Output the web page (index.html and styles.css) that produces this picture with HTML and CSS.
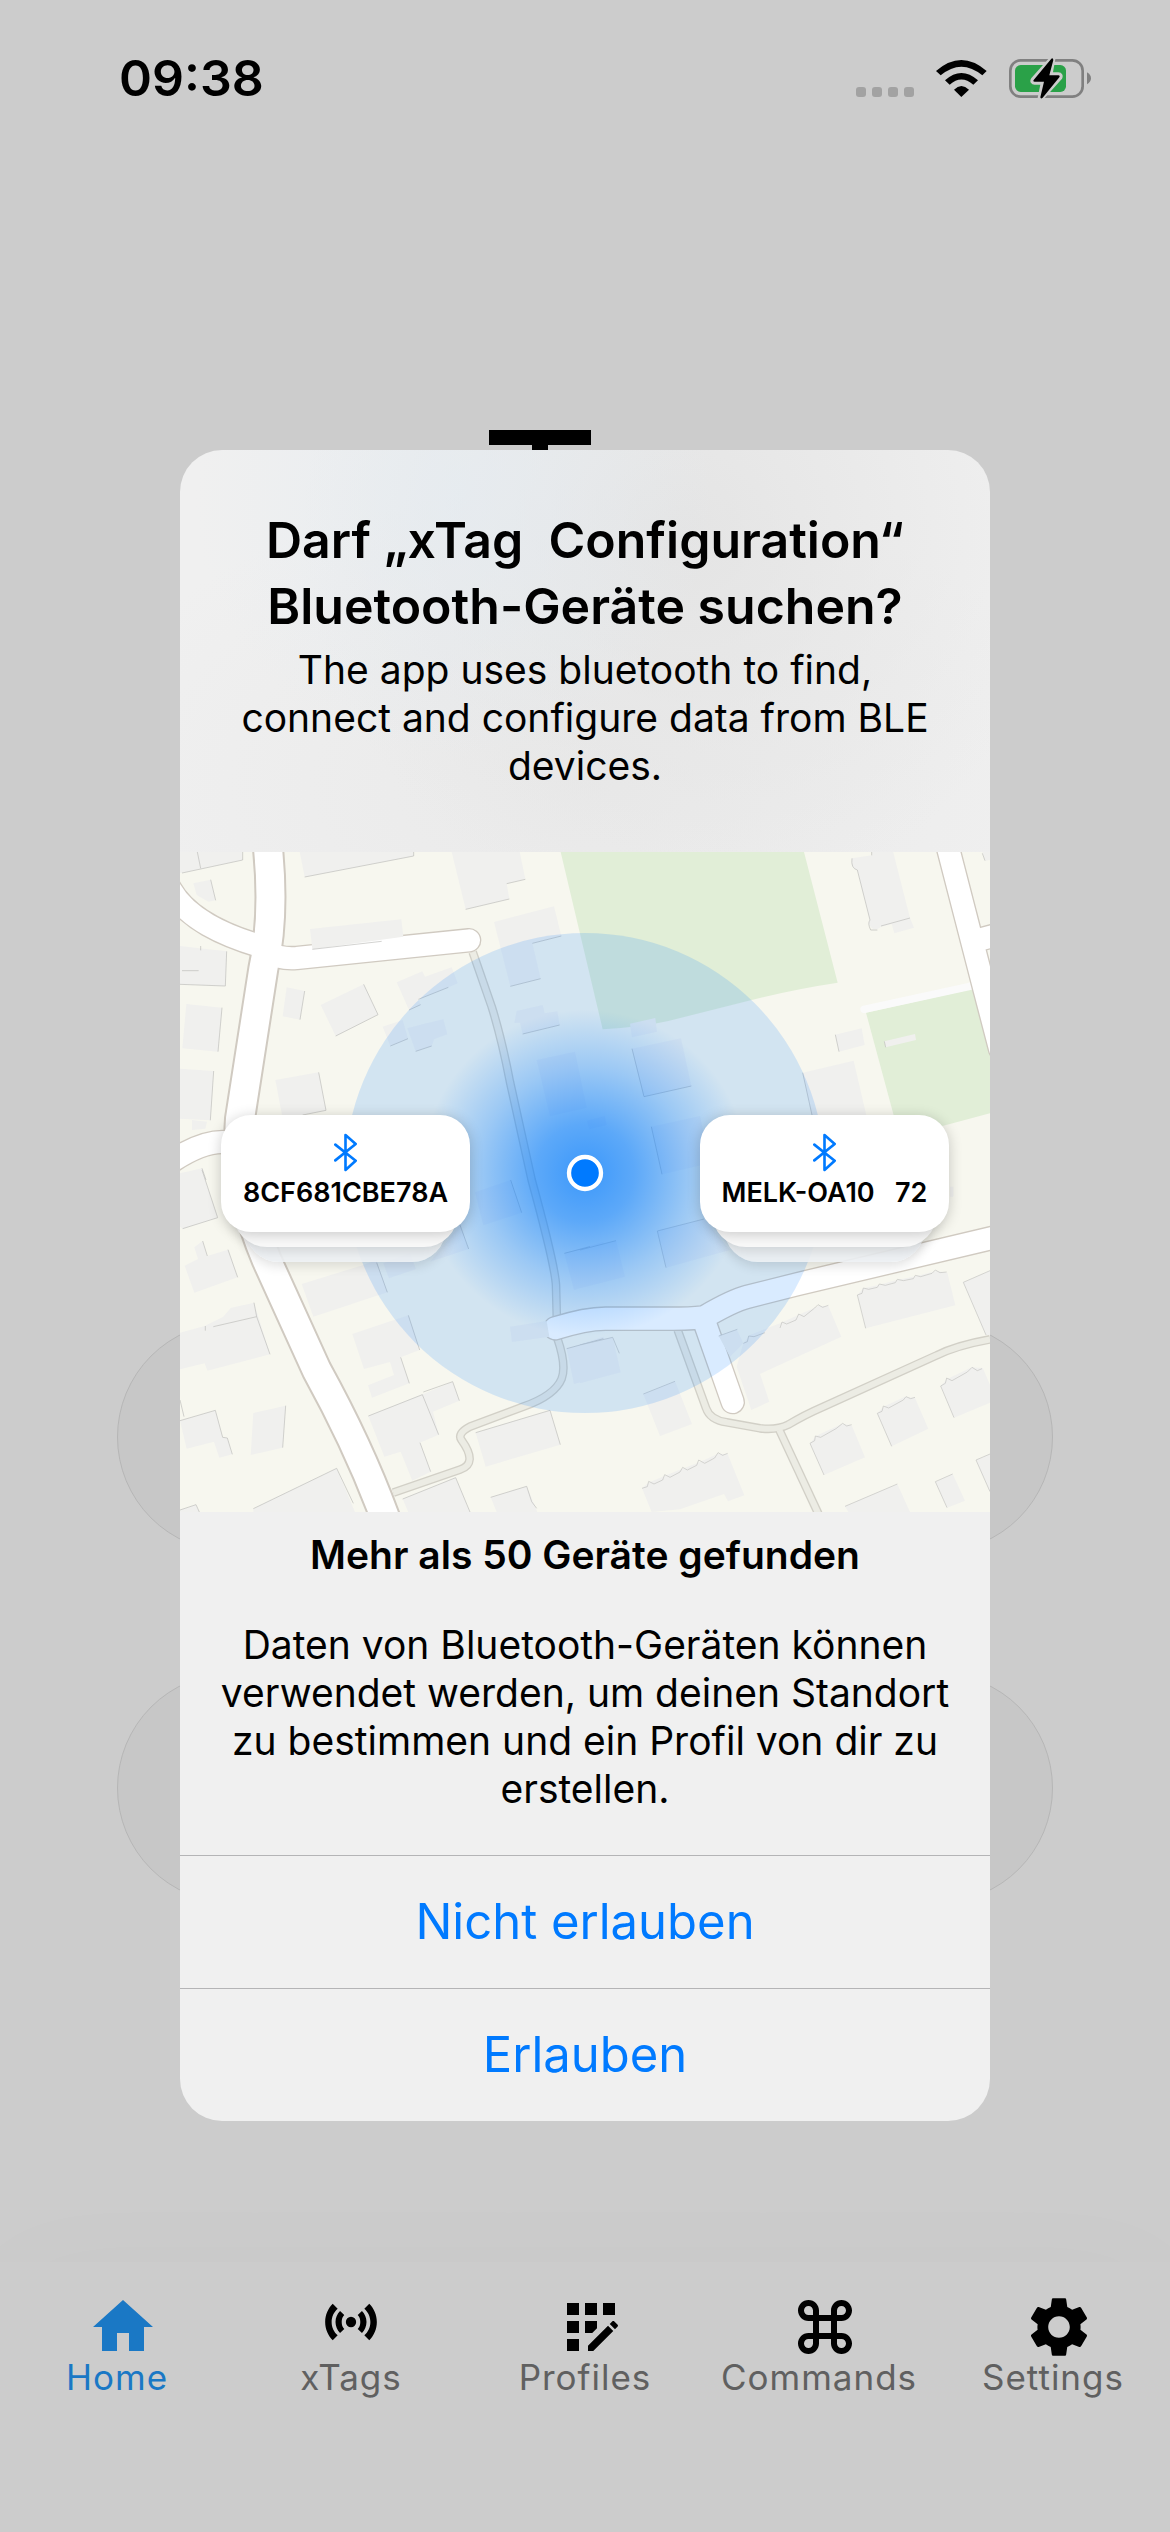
FILE: index.html
```html
<!DOCTYPE html>
<html lang="de">
<head>
<meta charset="utf-8">
<meta name="viewport" content="width=device-width, initial-scale=1">
<title>xTag Configuration</title>
<link rel="stylesheet" href="styles.css">
</head>
<body>
<div class="app">
  <header class="status">
    <time class="status-time">09:38</time>
    <div class="status-icons">
      <svg class="icon-signal" viewBox="78 51 174 123" fill="#a2a2a2" aria-hidden="true">
        <rect x="78" y="138" width="30" height="30" rx="9"/><rect x="126" y="138" width="30" height="30" rx="9"/><rect x="174" y="138" width="30" height="30" rx="9"/><rect x="222" y="138" width="30" height="30" rx="9"/>
      </svg>
      <svg class="icon-wifi" viewBox="318 51 153 123" aria-hidden="true">
        <path d="M318 90Q394 24 470 90L457 103Q394 51 332 103Z"/>
        <path d="M345 118Q394 74 444 118L430 131Q394 100 359 131Z"/>
        <path d="M372 146Q394 124 417 146L394 168Z"/>
      </svg>
      <svg class="icon-battery" viewBox="537 51 246 123" aria-hidden="true">
        <rect x="541" y="58" width="217" height="109" rx="31" fill="none" stroke="#808080" stroke-width="8"/>
        <path d="M771 94Q783 101 783 112T771 130Z" fill="#808080"/>
        <rect x="555" y="72" width="153" height="81" rx="17" fill="#2aa148"/>
        <path d="M667 54L611 117Q608 122 614 122H642L632 171L688 109Q691 103 685 103H658Z" stroke="#ccc" stroke-width="18" stroke-linejoin="round"/>
        <path d="M664 53L611 117Q608 122 614 122H642L631 169Q632 175 638 170L688 109Q691 103 685 103H658L670 57Q669 50 664 53Z"/>
      </svg>
    </div>
  </header>

  <main class="home">
    <svg class="logo" viewBox="0 0 102 120" aria-hidden="true"><path d="M0 0H102V15H59V120H43V15H0Z"/></svg>
    <div class="tile"></div>
    <div class="tile"></div>
  </main>

  <nav class="tabs">
    <a class="tab active" href="#home">
      <svg class="tab-icon" viewBox="0 0 24 24" aria-hidden="true"><path d="M10 20v-6h4v6h5v-8h3L12 3 2 12h3v8z"/></svg>
      <span>Home</span>
    </a>
    <a class="tab" href="#xtags">
      <svg class="tab-icon small" viewBox="0 0 24 24" aria-hidden="true"><path d="M4.930 4.930C3.120 6.740 2 9.240 2 12C2 14.760 3.120 17.260 4.930 19.070L6.840 17.160C5.400 15.900 4.500 14.100 4.500 12C4.500 9.900 5.400 8.100 6.840 6.840ZM19.070 4.930L17.160 6.840C18.600 8.100 19.500 9.900 19.500 12C19.500 14.100 18.600 15.900 17.160 17.160L19.070 19.070C20.880 17.260 22 14.760 22 12C22 9.240 20.880 6.740 19.070 4.930ZM7.760 7.760C6.670 8.850 6 10.350 6 12C6 13.650 6.670 15.150 7.760 16.240L9.400 14.700C8.700 14 8.400 13.110 8.400 12C8.400 10.890 8.700 10 9.400 9.300ZM16.240 7.760L14.600 9.300C15.300 10 15.600 10.890 15.600 12C15.600 13.110 15.300 14 14.600 14.700L16.240 16.240C17.330 15.150 18 13.650 18 12C18 10.350 17.330 8.850 16.240 7.760ZM12 10A2 2 0 1 0 12 14A2 2 0 1 0 12 10Z"/></svg>
      <span>xTags</span>
    </a>
    <a class="tab" href="#profiles">
      <svg class="tab-icon" viewBox="0 0 24 24" aria-hidden="true"><path d="M10 4h4v4h-4zM4 16h4v4H4zM4 10h4v4H4zM4 4h4v4H4zM14 12.420V10h-4v4h2.420zM20.880 11.290l-1.170-1.170c-.16-.16-.42-.16-.58 0l-.88.88L20 12.750l.88-.88c.16-.16.16-.42 0-.58zM11 18.250V20h1.750l6.670-6.670-1.750-1.750zM16 4h4v4h-4z"/></svg>
      <span>Profiles</span>
    </a>
    <a class="tab" href="#commands">
      <svg class="tab-icon" viewBox="0 0 24 24" aria-hidden="true"><path d="M17.500 3C15.570 3 14 4.570 14 6.500V8h-4V6.500C10 4.570 8.430 3 6.500 3S3 4.570 3 6.500S4.570 10 6.500 10H8v4H6.500C4.570 14 3 15.570 3 17.500S4.570 21 6.500 21s3.500-1.570 3.500-3.500V16h4v1.500c0 1.930 1.570 3.500 3.500 3.500s3.500-1.570 3.500-3.500S19.430 14 17.500 14H16v-4h1.500c1.930 0 3.500-1.570 3.500-3.500S19.430 3 17.500 3zM16 8V6.500C16 5.670 16.670 5 17.500 5S19 5.670 19 6.500S18.330 8 17.500 8H16zM6.500 8C5.670 8 5 7.330 5 6.500S5.670 5 6.500 5S8 5.670 8 6.500V8H6.500zM10 14v-4h4v4H10zM17.500 19c-.83 0-1.500-.67-1.500-1.500V16h1.500c.83 0 1.500.67 1.500 1.500S18.330 19 17.500 19zM6.500 19C5.670 19 5 18.330 5 17.500S5.670 16 6.500 16H8v1.500C8 18.330 7.330 19 6.500 19z"/></svg>
      <span>Commands</span>
    </a>
    <a class="tab" href="#settings">
      <svg class="tab-icon" viewBox="0 0 24 24" aria-hidden="true"><path d="M19.140 12.940c.04-.3.06-.61.06-.94 0-.32-.02-.64-.07-.94l2.030-1.580c.18-.14.23-.41.12-.61l-1.920-3.320c-.12-.22-.37-.29-.59-.22l-2.390.96c-.5-.38-1.030-.7-1.620-.94l-.36-2.540c-.04-.24-.24-.41-.48-.41h-3.840c-.24 0-.43.17-.47.41l-.36 2.540c-.59.24-1.130.57-1.620.94l-2.390-.96c-.22-.08-.47 0-.59.22L2.740 8.870c-.12.21-.08.47.12.61l2.030 1.580c-.05.3-.09.63-.09.94s.02.64.07.94l-2.030 1.580c-.18.14-.23.41-.12.61l1.920 3.320c.12.22.37.29.59.22l2.390-.96c.5.38 1.030.7 1.620.94l.36 2.540c.05.24.24.41.48.41h3.840c.24 0 .44-.17.47-.41l.36-2.540c.59-.24 1.130-.56 1.620-.94l2.390.96c.22.08.47 0 .59-.22l1.920-3.320c.12-.22.07-.47-.12-.61l-2.010-1.580zM12 15.600c-1.980 0-3.600-1.620-3.600-3.600s1.620-3.600 3.600-3.600 3.600 1.620 3.600 3.600-1.620 3.600-3.600 3.600z"/></svg>
      <span>Settings</span>
    </a>
  </nav>
</div>

<div class="overlay">
  <section class="dialog" role="alertdialog" aria-modal="true" aria-labelledby="dialog-title" aria-describedby="dialog-text">
    <div class="dialog-head">
      <h1 class="dialog-title" id="dialog-title">Darf „xTag&nbsp; Configuration“ Bluetooth-Geräte suchen?</h1>
      <p class="dialog-text" id="dialog-text">The app uses bluetooth to find, connect and configure data from BLE devices.</p>
    </div>

    <div class="map">
      <svg class="map-art" viewBox="0 0 2430 1980" preserveAspectRatio="xMidYMid slice" aria-hidden="true">
        <defs>
          <radialGradient id="glow">
            <stop offset="0" stop-color="#007aff" stop-opacity=".72"/>
            <stop offset=".3" stop-color="#007aff" stop-opacity=".56"/>
            <stop offset=".65" stop-color="#007aff" stop-opacity=".26"/>
            <stop offset="1" stop-color="#007aff" stop-opacity="0"/>
          </radialGradient>
        </defs>
        <rect width="2430" height="1980" fill="#f7f7ef"/>
        <g fill="#e1eed7">
          <path d="M1142 0L1268 532Q1380 526 1465 507L1715 444Q1840 412 1973 392L1872 0Z"/>
          <path d="M2058 482L2380 410L2430 580V784L2290 821L2152 830Z"/>
        </g>
        <path d="M2052 472L2380 401" fill="none" stroke="#fafafa" stroke-width="22" stroke-linecap="round"/>

        <!-- footpaths: edge, then fill -->
        <g fill="none" stroke-linejoin="round">
          <g stroke="#d2d0c7" stroke-width="26">
            <path d="M878 300L935 464Q965 560 990 690L1055 984Q1125 1240 1128 1300L1132 1459Q1160 1540 1145 1580Q1125 1630 1030 1664L870 1724Q830 1745 845 1765Q895 1835 840 1853L640 1922"/>
            <path d="M1493 1434L1578 1668Q1590 1704 1640 1711L1740 1729Q1790 1735 1825 1718Q1870 1690 1930 1664L2270 1510Q2330 1480 2430 1462"/>
            <path d="M1798 1734L1915 1985"/>
          </g>
          <g stroke="#ecece4" stroke-width="18">
            <path d="M878 300L935 464Q965 560 990 690L1055 984Q1125 1240 1128 1300L1132 1459Q1160 1540 1145 1580Q1125 1630 1030 1664L870 1724Q830 1745 845 1765Q895 1835 840 1853L640 1922"/>
            <path d="M1493 1434L1578 1668Q1590 1704 1640 1711L1740 1729Q1790 1735 1825 1718Q1870 1690 1930 1664L2270 1510Q2330 1480 2430 1462"/>
            <path d="M1798 1734L1915 1985"/>
          </g>
        </g>

        <!-- roads: edge, then fill -->
        <g fill="none" stroke="#d0cac1" stroke-linejoin="round" stroke-linecap="round">
          <g stroke-width="96">
            <path d="M263 -20Q285 190 250 350L180 800Q165 1000 260 1224L410 1554Q540 1790 620 2010"/>
          </g>
          <g stroke-width="74">
            <path d="M-30 110C20 200 130 250 250 285"/>
            <path d="M260 300Q300 322 350 318L867 265"/>
            <path d="M-20 925Q80 860 150 872"/>
            <path d="M1126 1429Q1220 1399 1280 1400H1480Q1550 1400 1575 1394Q1660 1345 1700 1335L1850 1297L2440 1157"/>
            <path d="M1570 1400L1658 1650"/>
            <path d="M2302 -20L2414 414L2460 590"/>
            <path d="M2390 265L2440 252"/>
          </g>
        </g>
        <g fill="none" stroke="#fff" stroke-linejoin="round" stroke-linecap="round">
          <g stroke-width="84">
            <path d="M263 -20Q285 190 250 350L180 800Q165 1000 260 1224L410 1554Q540 1790 620 2010"/>
          </g>
          <g stroke-width="66">
            <path d="M-30 110C20 200 130 250 250 285"/>
            <path d="M260 300Q300 322 350 318L867 265"/>
            <path d="M-20 925Q80 860 150 872"/>
            <path d="M1126 1429Q1220 1399 1280 1400H1480Q1550 1400 1575 1394Q1660 1345 1700 1335L1850 1297L2440 1157"/>
            <path d="M1570 1400L1658 1650"/>
            <path d="M2302 -20L2414 414L2460 590"/>
            <path d="M2390 265L2440 252"/>
          </g>
        </g>

        <!-- buildings, north-west -->
        <g transform="translate(-30 -36)" fill="#f0f0ee">
          <path d="M30 30H215L218 60L36 99L30 98ZM70 130L122 119L137 181L115 185L80 165ZM388 30H731V48L404 111ZM845 36L1048 30L1066 118L1010 131L1018 177L887 208ZM420 267L694 238L700 290L427 328ZM972 246L1152 199L1174 288L1087 310L1112 416L1021 439ZM30 318L170 334L166 438L30 433ZM49 492L156 503L144 635L37 625ZM350 442L404 453L390 539L338 529ZM452 495L581 433L624 524L497 588ZM30 686L131 693L121 841L30 836ZM66 840L111 845L106 866L66 870ZM316 720L446 697L468 811L398 825H336ZM680 427L757 394L765 410L845 382L863 430L835 442L745 478L752 494L717 510ZM638 560L698 540L714 596L661 618ZM712 565L760 552L820 538L832 583L792 598L785 618L737 634ZM1040 513L1118 495L1124 520L1162 514L1169 555L1058 582L1050 548L1033 549ZM1100 660L1215 635L1250 803L1140 829ZM30 1000L96 985L108 1020H30Z"/>
          <path d="M36 99L218 60V36M404 111L731 48V36M887 208L1018 177M1010 131L1066 118M1087 310L1174 288M1021 439L1112 416M170 334L166 438L30 433M156 503L144 635M497 588L624 524L581 433M131 693L121 841M446 697L468 811L398 825M745 478L835 442M717 510L752 494M661 618L714 596M737 634L785 618M1058 582L1169 555M427 328L635 304M404 453L390 539M82 36L92 85M122 119L137 181M92 318V331M36 392H86M96 985L108 1020" fill="none" stroke="#bdbdba" stroke-width="2"/>
        </g>
        <!-- buildings, north-east -->
        <g transform="translate(1200 -36)" fill="#f0f0ee">
          <path d="M816 55L875 46V30H938L990 234L1002 263L943 280L935 252L903 260Q880 280 865 250L870 240L832 90Q810 85 816 55ZM766 584L845 565L854 615L777 635ZM668 698L821 662L860 830H696ZM913 604L1005 582L1008 600L917 622ZM1207 36H1230V60L1215 62ZM150 551L226 534L231 575L156 592ZM156 626L303 595L334 738L192 770ZM214 860L360 828L390 970L246 1003ZM20 842L74 828L80 855L28 868Z"/>
          <path d="M875 46V36M832 90L870 240Q862 250 872 270H892M903 258L990 234M816 55Q812 85 832 90M777 635L766 584M668 698L696 825M192 770L334 738M156 626L192 770M246 1003L214 860M917 622L913 604M1207 40L1215 62" fill="none" stroke="#bdbdba" stroke-width="2"/>
        </g>
        <!-- buildings, south-west -->
        <g transform="translate(-30 954)" fill="#f0f0ee">
          <path d="M30 20L96 0L143 143L38 176L30 170ZM44 287L84 267L73 232L98 213L112 258L174 239L203 322L73 368ZM30 488L104 468L160 440L182 414L252 398L300 553L112 602L104 580L30 598ZM250 729L347 707L338 833L242 855ZM30 752L136 721L158 802L172 804L187 853L148 863L132 815L50 836ZM395 342L580 285L620 270L652 367L430 440ZM547 492L715 436L749 540L692 562L718 640L606 683L594 646L672 615L660 576L582 597ZM595 738L760 672L848 635L868 692L789 725L806 794L750 818L782 905L727 932L692 845L643 860ZM917 788L1140 721L1171 824L947 890ZM250 1016L500 895L555 1026H250ZM698 987L857 923L900 1026H715ZM962 982L1070 949L1102 1026H980ZM30 1020L78 1004L88 1026H30ZM1020 470L1130 453L1138 500L1026 516ZM1190 536L1300 500L1330 610L1212 642ZM915 67L1022 30L1055 128L940 166ZM1183 250L1300 215L1330 322L1212 360ZM640 280L720 250L738 297L657 325ZM870 165L896 237L780 275Z"/>
          <path d="M96 0L143 143L38 176M174 239L203 322M98 213L112 258M260 440L300 553M252 398L260 440L130 470M106 468V482M347 707L338 833M136 721L158 802L172 804L187 853M30 752L136 721M620 278L652 367M715 436L749 540M692 562L718 640M595 738L757 674L806 794M760 666L848 635L868 692M750 818L782 905M917 788L1140 721L1171 824M250 1016L500 895L550 1000M698 987L857 923L900 1026M962 982L1070 949L1085 995L1100 1015M30 1020L78 1004L88 1026M30 690L42 740M1190 536L1300 506M1183 250L1260 230M870 165L896 237M1022 30L1055 128" fill="none" stroke="#bdbdba" stroke-width="2"/>
        </g>
        <!-- buildings, south-east -->
        <g transform="translate(1200 954)" fill="#f0f0ee">
          <path d="M832 375L850 355L895 345L950 330L1010 318L1070 303L1102 308L1126 406L857 475ZM1150 337L1230 302V495H1218ZM490 520L510 495L600 460L655 435L715 408L745 408L784 500L540 612L568 695L514 720L470 590ZM416 498L470 478L490 520L450 560ZM190 672L285 634L336 762L240 798ZM1082 648L1100 628L1175 592L1208 594L1250 690L1122 743ZM892 730L910 710L975 680L1005 684L1045 776L935 829ZM690 820L708 798L785 762L815 766L855 862L732 915ZM1188 870L1230 852V965ZM1066 935L1118 912L1155 992L1101 1013ZM795 1009L952 942L990 1026H805ZM186 955L205 938L255 917L305 897L358 877L412 852L443 852L493 976L444 994L432 972L300 1018L215 1026ZM232 183L372 147L450 240L258 293ZM0 240L108 212L135 320L0 355ZM0 525L98 502L122 607L0 640ZM1110 50H1120V80H1110Z"/>
          <path d="M832 375L857 475M832 375L846 370L850 354L866 358L892 352L898 342L916 346L946 338L952 328L970 332L1000 326L1006 316L1022 320L1056 310L1066 300L1080 308L1100 306M490 520L502 515L506 498L522 500L555 488M600 474L606 456L620 462L648 450L656 432L672 440L704 414L714 404L728 412L745 406M416 498L472 478M190 672L285 634M1082 648L1122 743M1082 648L1096 640L1100 624L1116 632L1162 606L1176 592L1192 602L1206 596M892 730L935 829M892 730L906 724L910 708L926 714L970 690L978 680L992 686L1005 682M690 820L732 915M690 820L704 812L706 798L722 802L768 776L788 760L800 768L815 764M1230 852L1188 870L1230 965M1066 935L1118 912M1066 935L1101 1013M795 1009L952 942M186 955L202 950L206 934L222 942L248 930L254 914L270 922L300 906L308 892L322 900L350 886L356 870L374 880L404 864L414 848L428 856L443 850M1150 337L1218 495M1150 337L1230 302M232 183L372 147M232 183L258 293M0 240L108 212M0 525L98 502L118 550" fill="none" stroke="#c2c2bf" stroke-width="2"/>
        </g>

        <circle cx="1215" cy="963" r="720" fill="#007aff" fill-opacity=".15"/>
        <circle cx="1215" cy="963" r="490" fill="url(#glow)"/>
        <circle cx="1215" cy="963" r="48" fill="#007aff" stroke="#fff" stroke-width="13"/>
      </svg>
      <ul class="pins">
        <li class="pin">
          <div class="pin-card">
            <svg class="icon-bluetooth" viewBox="0 0 70 116" aria-hidden="true"><path d="M4 34L66 83L35 111V5L66 32L4 82"/></svg>
            <span>8CF681CBE78A</span>
          </div>
        </li>
        <li class="pin">
          <div class="pin-card">
            <svg class="icon-bluetooth" viewBox="0 0 70 116" aria-hidden="true"><path d="M4 34L66 83L35 111V5L66 32L4 82"/></svg>
            <span>MELK-OA10&nbsp;&nbsp; 72</span>
          </div>
        </li>
      </ul>
    </div>

    <div class="dialog-foot">
      <h2 class="dialog-count">Mehr als 50 Geräte gefunden</h2>
      <p class="dialog-text">Daten von Bluetooth-Geräten können verwendet werden, um deinen Standort zu bestimmen und ein Profil von dir zu erstellen.</p>
    </div>
    <button class="dialog-button" type="button">Nicht erlauben</button>
    <button class="dialog-button" type="button">Erlauben</button>
  </section>
</div>
</body>
</html>
```
FILE: styles.css
```css
* {
  box-sizing: border-box;
  margin: 0;
  padding: 0;
}

body {
  background: #ccc;
  color: #000;
  font-family: Inter, "Liberation Sans", sans-serif;
}

svg {
  display: block;
}

/* Screen behind the dialog */
.app {
  display: flex;
  flex-direction: column;
  min-height: 100vh;
}

.status {
  display: flex;
  justify-content: space-between;
  align-items: center;
  padding: 48px 79px 0 119px;
}

.status-time {
  font-size: 50px;
  font-weight: 600;
  line-height: 60px;
}

.status-icons {
  display: flex;
  gap: 22px;
}

.icon-signal {
  width: 58px;
  height: 41px;
}

.icon-wifi {
  width: 51px;
  height: 41px;
}

.icon-battery {
  width: 82px;
  height: 41px;
}

.home {
  flex: 1;
  display: flex;
  flex-direction: column;
  gap: 121px;
  padding: 322px 117px 0;
}

.logo {
  width: 102px;
  height: 120px;
  margin: 0 0 651px 372px;
}

.tile {
  height: 230px;
  border: 1px solid #b6b6b6;
  border-radius: 115px;
  background: #c7c7c7;
}

.tabs {
  display: grid;
  grid-template-columns: repeat(5, 1fr);
  padding: 29px 0 142px;
  background: #ccc;
  box-shadow: 0 0 120px rgba(0, 0, 0, 0.02);
}

.tab {
  display: flex;
  flex-direction: column;
  align-items: center;
  color: #606060;
  font-size: 35px;
  line-height: 26px;
  letter-spacing: 1px;
  text-decoration: none;
}

.tab-icon {
  width: 72px;
  height: 72px;
  margin: 0 0 1px 12px;
  fill: #000;
}

.tab-icon.small {
  width: 62px;
  height: 62px;
  margin: 0 0 11px;
}

.tab.active {
  color: #1a78c5;
}

.tab.active .tab-icon {
  fill: currentColor;
}

/* Permission dialog */
.overlay {
  position: absolute;
  inset: 0;
  display: grid;
  place-items: center;
  padding: 38px 20px 0;
}

.dialog {
  width: 100%;
  max-width: 810px;
  overflow: hidden;
  border-radius: 42px;
  background:
    radial-gradient(circle 260px at 34% 3%, rgba(228, 235, 241, 0.7), transparent),
    radial-gradient(circle 380px at 62% 5%, rgba(227, 227, 227, 0.9), transparent),
    radial-gradient(ellipse 520px 300px at 50% 20%, rgba(232, 232, 232, 0.8), transparent),
    #f0f0f0;
  text-align: center;
}

.dialog-head {
  padding: 57px 50px 62px;
}

.dialog-title {
  margin-bottom: 7px;
  font-size: 50px;
  font-weight: 600;
  line-height: 66px;
}

.dialog-text {
  font-size: 39px;
  line-height: 48px;
}

.dialog-foot {
  padding: 19px 30px 42px;
}

.dialog-count {
  margin-bottom: 42px;
  font-size: 39px;
  font-weight: 600;
  line-height: 48px;
}

.dialog-button {
  display: block;
  width: 100%;
  padding: 36px 20px;
  border: 0;
  border-top: 1px solid #b4b4b6;
  background: none;
  color: #007aff;
  font: inherit;
  font-size: 49px;
  line-height: 60px;
}

/* Map with nearby devices */
.map {
  display: grid;
  height: 660px;
}

.map-art,
.pins {
  grid-area: 1 / 1;
  width: 100%;
}

.map-art {
  height: 660px;
}

.pins {
  z-index: 1;
  display: flex;
  justify-content: space-between;
  align-items: flex-start;
  padding: 263px 41px 0;
  list-style: none;
}

.pin {
  position: relative;
  width: 249px;
}

.pin::before,
.pin::after {
  content: "";
  position: absolute;
  z-index: -1;
  height: 90px;
  border-radius: 34px;
  box-shadow: 0 4px 12px rgba(0, 0, 0, 0.12);
}

.pin::before {
  inset: auto 24px -30px;
  z-index: -2;
  background: rgba(236, 240, 243, 0.9);
}

.pin::after {
  inset: auto 12px -15px;
  background: #f9f9f9;
}

.pin-card {
  display: flex;
  flex-direction: column;
  align-items: center;
  gap: 5px;
  height: 117px;
  padding-top: 18px;
  border-radius: 30px;
  background: #fff;
  box-shadow: 0 2px 14px rgba(0, 0, 0, 0.2);
  font-size: 27px;
  font-weight: 600;
  line-height: 32px;
  white-space: nowrap;
}

.icon-bluetooth {
  width: 23px;
  height: 39px;
  fill: none;
  stroke: #007aff;
  stroke-width: 8;
  stroke-linecap: round;
  stroke-linejoin: round;
}
```
